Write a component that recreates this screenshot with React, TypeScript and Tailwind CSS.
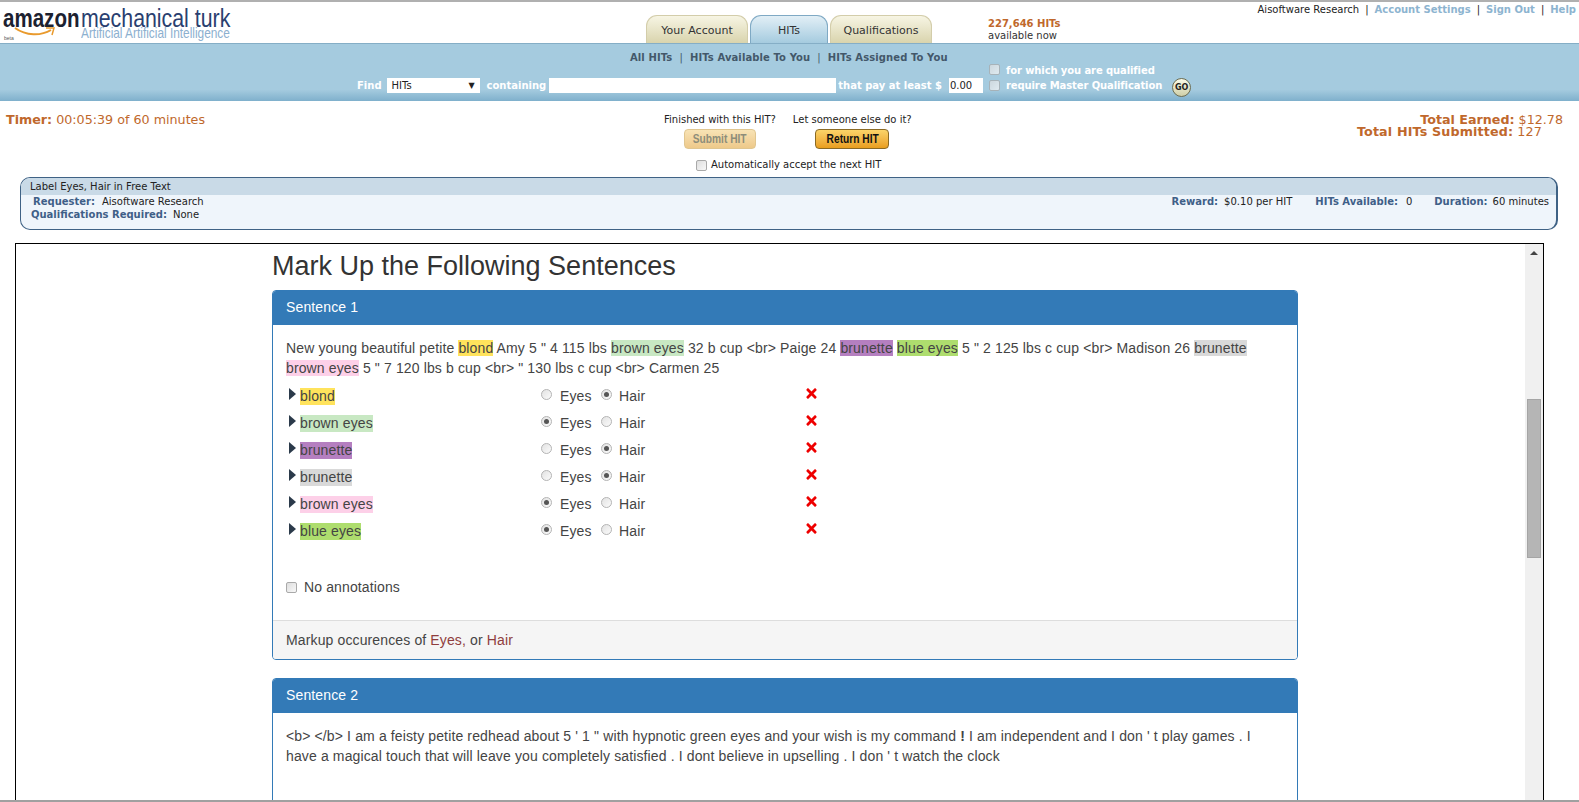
import { FaTimes } from 'react-icons/fa'

const sans = "font-['Liberation_Sans',Arial,sans-serif]"

const rows = [
  { label: 'blond', color: 'bg-[#ffe35c]', picked: 'Hair' },
  { label: 'brown eyes', color: 'bg-[#c8e8c3]', picked: 'Eyes' },
  { label: 'brunette', color: 'bg-[#b57fc0]', picked: 'Hair' },
  { label: 'brunette', color: 'bg-[#d9d9d9]', picked: 'Hair' },
  { label: 'brown eyes', color: 'bg-[#fdd0e8]', picked: 'Eyes' },
  { label: 'blue eyes', color: 'bg-[#aedd6e]', picked: 'Eyes' },
]

function Radio({ on }: { on: boolean }) {
  return (
    <span className="w-[11px] h-[11px] -mt-[2px] rounded-full border border-[#b4b4b4] bg-gradient-to-br from-[#e2e2e2] to-[#fbfbfb] flex items-center justify-center shrink-0">
      {on && <span className="w-[5px] h-[5px] rounded-full bg-[#555555]"></span>}
    </span>
  )
}

function Check({ className = '' }: { className?: string }) {
  return (
    <span
      className={`inline-block w-[11px] h-[11px] rounded-[2px] border border-[#a9a9a9] bg-gradient-to-br from-[#dedede] to-[#f8f8f8] shrink-0 ${className}`}
    ></span>
  )
}

function Tab({ label, active, width }: { label: string; active?: boolean; width: string }) {
  return (
    <div
      className={`${width} h-[28px] rounded-t-[11px] border border-b-0 flex items-center justify-center pt-[4px] text-[11px] text-[#333333] ${
        active
          ? 'border-[#7fa9c4] bg-gradient-to-b from-[#e2eff6] to-[#a5cbdf]'
          : 'border-[#d3cdaa] bg-gradient-to-b from-[#f7f5e4] to-[#d9d4ad]'
      }`}
    >
      {label}
    </div>
  )
}

function Header() {
  return (
    <div className="h-[41px] flex shrink-0">
      <div className={`w-[646px] pl-[3px] pt-[3px] shrink-0 relative ${sans}`}>
        <div className="flex h-[26px] leading-[27px] whitespace-nowrap">
          <span className="w-[78px] font-bold text-[26px] text-[#1c2130] origin-left scale-x-[0.79]">amazon</span>
          <span className="text-[26px] text-[#2a3f70] origin-left scale-x-[0.82]">mechanical turk</span>
        </div>
        <div className="text-[15px] leading-[13px] -mt-[5px] text-[#8cb0cf] ml-[78px] whitespace-nowrap origin-left scale-x-[0.79]">
          Artificial Artificial Intelligence
        </div>
        <svg className="absolute left-[14px] top-[24px]" width="42" height="12" viewBox="0 0 42 12">
          <path d="M1 2 C12 10 27 10 37 4" fill="none" stroke="#e99a2d" strokeWidth="2" />
          <path d="M32 2 L40 2 L38 9" fill="none" stroke="#e99a2d" strokeWidth="1.5" />
        </svg>
        <span className="absolute left-[4px] top-[33px] text-[5px] text-[#555555]">beta</span>
      </div>
      <div className="flex items-end gap-[2px] self-end">
        <Tab label="Your Account" width="w-[102px]" />
        <Tab label="HITs" active width="w-[78px]" />
        <Tab label="Qualifications" width="w-[102px]" />
      </div>
      <div className="ml-[56px] pt-[16px] text-[10px] leading-[12px]">
        <div className="font-bold text-[#c0682c]">227,646 HITs</div>
        <div className="text-[#333333]">available now</div>
      </div>
      <div className="ml-auto pr-[3px] pt-[2px] text-[10px] leading-[12px] flex gap-[6px] text-[#222222]">
        <span>Aisoftware Research</span>
        <span>|</span>
        <span className="font-bold text-[#8db4d0]">Account Settings</span>
        <span>|</span>
        <span className="font-bold text-[#8db4d0]">Sign Out</span>
        <span>|</span>
        <span className="font-bold text-[#8db4d0]">Help</span>
      </div>
    </div>
  )
}

function SearchBand() {
  return (
    <div className="h-[58px] shrink-0 border-t border-[#85aec6] bg-gradient-to-b from-[#a5cbdf] from-80% to-[#7fb0cc] text-[10px] font-bold">
      <div className="pl-[630px] pt-[7px] h-[19px] leading-[13px] text-[#43586a] flex gap-[7px] tracking-[0.1px]">
        <span>All HITs</span>
        <span className="font-normal">|</span>
        <span>HITs Available To You</span>
        <span className="font-normal">|</span>
        <span>HITs Assigned To You</span>
      </div>
      <div className="flex text-white mt-[1px]">
        <div className="pl-[357px] pt-[14px] flex items-center h-[29px] shrink-0">
          <span>Find</span>
          <div className="ml-[5px] w-[93px] h-[15px] bg-white flex items-center justify-between px-[5px] font-normal text-[#222222]">
            <span>HITs</span>
            <span className="text-[8px]">▼</span>
          </div>
          <span className="ml-[7px]">containing</span>
          <div className="ml-[3px] w-[287px] h-[15px] bg-white"></div>
          <span className="ml-[2px]">that pay at least $</span>
          <div className="ml-[7px] w-[34px] h-[15px] bg-white font-normal text-[#222222] pl-[1px] leading-[15px]">0.00</div>
        </div>
        <div className="ml-[6px] leading-[15px] -mt-[4px] pt-[3px] tracking-[-0.1px]">
          <div className="flex items-center gap-[6px]">
            <Check className="opacity-70 -mt-[3px]" />
            <span>for which you are qualified</span>
          </div>
          <div className="flex items-center gap-[6px]">
            <Check className="opacity-70" />
            <span>require Master Qualification</span>
          </div>
        </div>
        <div className="ml-[10px] mt-[14px] w-[19px] h-[19px] rounded-full border border-[#6d6d50] bg-gradient-to-b from-[#fbfbe8] to-[#cfcfa8] flex items-center justify-center text-[8px] text-[#222222]">
          GO
        </div>
      </div>
    </div>
  )
}

function ActionBar() {
  return (
    <div className="h-[76px] shrink-0 flex">
      <div className="w-[664px] pl-[6px] pt-[12px] text-[12.7px] leading-[14px] text-[#c0682c] shrink-0">
        <b>Timer:</b> 00:05:39 of 60 minutes
      </div>
      <div className="w-[248px] pt-[13px] text-[10px] leading-[12px] text-[#222222] shrink-0">
        <div className="flex gap-[17px] whitespace-nowrap">
          <div className="flex flex-col items-center">
            <span>Finished with this HIT?</span>
            <div className={`mt-[3px] w-[72px] h-[20px] rounded-[4px] border border-[#e0c690] bg-gradient-to-b from-[#f8e3b5] to-[#eec98a] flex items-center justify-center text-[#8d8d7a] font-bold text-[12px] ${sans}`}>
              <span className="scale-x-[0.85]">Submit HIT</span>
            </div>
          </div>
          <div className="flex flex-col items-center">
            <span>Let someone else do it?</span>
            <div className={`mt-[3px] w-[74px] h-[20px] rounded-[4px] border border-[#8a6a25] bg-gradient-to-b from-[#fbd468] to-[#e99e1c] flex items-center justify-center text-[#111111] font-bold text-[12px] ${sans}`}>
              <span className="scale-x-[0.85]">Return HIT</span>
            </div>
          </div>
        </div>
        <div className="mt-[10px] ml-[32px] flex items-center gap-[4px] whitespace-nowrap">
          <Check />
          <span>Automatically accept the next HIT</span>
        </div>
      </div>
      <div className="flex-1 pt-[13px] pr-[16px] text-right text-[12.7px] leading-[12px] text-[#c0682c]">
        <div>
          <b>Total Earned:</b> $12.78
        </div>
        <div className="pr-[21px] tracking-[0.15px]">
          <b>Total HITs Submitted:</b> 127
        </div>
      </div>
    </div>
  )
}

function HitInfo() {
  const label = 'font-bold text-[#3f5f88]'
  return (
    <div className="mx-[20px] mr-[21px] h-[53px] shrink-0 rounded-[10px] border border-[#3f6285] border-r-2 overflow-hidden bg-[#eff5fb] text-[10px] text-[#222222]">
      <div className="h-[17px] bg-[#c9dae7] pl-[9px] leading-[17px]">Label Eyes, Hair in Free Text</div>
      <div className="flex justify-between leading-[13px]">
        <div className="pl-[10px]">
          <div className="pl-[2px]">
            <span className={label}>Requester:</span>
            <span className="ml-[7px]">Aisoftware Research</span>
          </div>
          <div>
            <span className={label}>Qualifications Required:</span>
            <span className="ml-[6px]">None</span>
          </div>
        </div>
        <div className="flex pr-[7px]">
          <span className={label}>Reward:</span>
          <span className="ml-[6px]">$0.10 per HIT</span>
          <span className={`${label} ml-[23px]`}>HITs Available:</span>
          <span className="ml-[8px]">0</span>
          <span className={`${label} ml-[22px]`}>Duration:</span>
          <span className="ml-[5px]">60 minutes</span>
        </div>
      </div>
    </div>
  )
}

function Mark({ color, children }: { color: string; children: string }) {
  return <span className={color}>{children}</span>
}

function Panel({ title, children }: { title: string; children: React.ReactNode }) {
  return (
    <div className="rounded-[4px] border border-[#337ab7] overflow-hidden mb-[18px]">
      <div className="h-[34px] bg-[#337ab7] text-white pl-[13px] leading-[32px]">{title}</div>
      {children}
    </div>
  )
}

function Sentence1() {
  return (
    <Panel title="Sentence 1">
      <div className="px-[13px] pt-[13px] h-[295px]">
        <p>
          New young beautiful petite <Mark color="bg-[#ffe35c]">blond</Mark> Amy 5 " 4 115 lbs{' '}
          <Mark color="bg-[#c8e8c3]">brown eyes</Mark> 32 b cup &lt;br&gt; Paige 24{' '}
          <Mark color="bg-[#b57fc0]">brunette</Mark> <Mark color="bg-[#aedd6e]">blue eyes</Mark> 5 " 2 125 lbs c cup
          &lt;br&gt; Madison 26 <Mark color="bg-[#d9d9d9]">brunette</Mark> <Mark color="bg-[#fdd0e8]">brown eyes</Mark> 5 " 7
          120 lbs b cup &lt;br&gt; " 130 lbs c cup &lt;br&gt; Carmen 25
        </p>
        <div className="mt-[4px]">
          {rows.map((r, i) => (
            <div key={i} className="h-[27px] flex items-center">
              <div className="w-[255px] flex items-center shrink-0">
                <span className="ml-[3px] w-0 h-0 border-y-[6px] border-y-transparent border-l-[7px] border-l-[#2b3a4a] -mt-[3px]"></span>
                <span className={`ml-[4px] mt-[2px] leading-[17px] ${r.color}`}>{r.label}</span>
              </div>
              <Radio on={r.picked === 'Eyes'} />
              <span className="ml-[8px] w-[41px]">Eyes</span>
              <Radio on={r.picked === 'Hair'} />
              <span className="ml-[7px] w-[185px]">Hair</span>
              <FaTimes className="text-[#ee0000] text-[15px] -mt-[4px]" />
            </div>
          ))}
        </div>
        <div className="mt-[33px] flex items-center gap-[7px]">
          <Check />
          <span>No annotations</span>
        </div>
      </div>
      <div className="h-[39px] bg-[#f5f5f5] border-t border-[#dddddd] pl-[13px] leading-[38px]">
        Markup occurences of <span className="text-[#8f3d3d]">Eyes,</span> or <span className="text-[#8f3d3d]">Hair</span>
      </div>
    </Panel>
  )
}

function Sentence2() {
  return (
    <Panel title="Sentence 2">
      <div className="px-[13px] pt-[13px] h-[120px]">
        &lt;b&gt; &lt;/b&gt; I am a feisty petite redhead about 5 ' 1 " with hypnotic green eyes and your wish is my command{' '}
        <b>!</b> I am independent and I don ' t play games . I have a magical touch that will leave you completely satisfied .
        I dont believe in upselling . I don ' t watch the clock
      </div>
    </Panel>
  )
}

function Frame() {
  return (
    <div className="flex-1 min-h-0 mt-[13px] ml-[15px] mr-[35px] border border-black border-b-0 flex overflow-hidden">
      <div className={`flex-1 min-w-0 pl-[256px] pr-[227px] text-[14px] leading-[20px] tracking-[0.13px] text-[#444444] ${sans}`}>
        <h2 className="text-[27px] leading-[30px] pt-[7px] mb-[9px] tracking-normal text-[#333333]">Mark Up the Following Sentences</h2>
        <Sentence1 />
        <Sentence2 />
      </div>
      <div className="w-[18px] shrink-0 bg-[#f0f0f0] flex flex-col items-center">
        <span className="mt-[7px] w-0 h-0 border-x-[4px] border-x-transparent border-b-[4px] border-b-[#444444]"></span>
        <div className="mt-[144px] w-[14px] h-[159px] bg-[#b5b5b5] border border-[#a5a5a5]"></div>
      </div>
    </div>
  )
}

export default function App() {
  return (
    <div className="w-[1579px] h-[802px] overflow-hidden bg-white flex flex-col border-t-2 border-b-2 border-t-[#b0b0b0] border-b-[#a0a0a0] font-['DejaVu_Sans',Verdana,sans-serif]">
      <Header />
      <SearchBand />
      <ActionBar />
      <HitInfo />
      <Frame />
    </div>
  )
}
